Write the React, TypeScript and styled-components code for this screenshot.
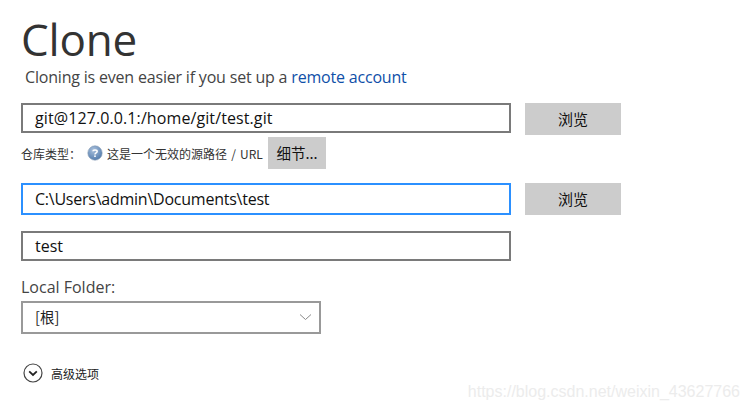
import styled, { createGlobalStyle } from 'styled-components';

const GlobalStyle = createGlobalStyle`
	html, body {
		margin: 0;
		background: #fff;
	}
	body {
		font-family: 'Open Sans', 'Noto Sans', 'Noto Sans CJK SC', sans-serif;
	}
`;

const Page = styled.div`
	position: relative;
	width: 749px;
	height: 410px;
	overflow: hidden;
	padding: 14px 0 0 21px;
	box-sizing: border-box;
	color: #333;
`;

const Title = styled.h1`
	margin: 0;
	height: 50px;
	line-height: 50px;
	font-size: 44px;
	font-weight: 400;
	letter-spacing: -0.2px;
	color: #333;
`;

const Subtitle = styled.div`
	margin: 3px 0 15px 4px;
	height: 21px;
	line-height: 21px;
	font-size: 16px;
	letter-spacing: -0.19px;
	color: #444;
`;

const RemoteLink = styled.a`
	color: #0f4fa8;
`;

const Row = styled.div<{ $mb?: number }>`
	display: flex;
	align-items: flex-start;
	gap: 14px;
	margin-bottom: ${(props) => props.$mb ?? 0}px;
`;

const TextInput = styled.div<{ $focused?: boolean; $h?: number; $ls?: number }>`
	box-sizing: border-box;
	width: 490px;
	height: ${(props) => props.$h ?? 30}px;
	line-height: ${(props) => (props.$h ?? 30) - 4}px;
	border: 2px solid ${(props) => (props.$focused ? '#2b90ff' : '#7a7a7a')};
	padding-left: 12px;
	font-size: 16px;
	letter-spacing: ${(props) => props.$ls ?? 0}px;
	color: #111;
`;

const Button = styled.button`
	width: 96px;
	height: 32px;
	padding: 0 0 2px;
	border: none;
	background: #ccc;
	font-family: 'Noto Sans CJK SC', sans-serif;
	font-size: 15px;
	color: #111;
`;

const InfoRow = styled.div`
	display: flex;
	align-items: center;
	height: 32px;
	margin: 2px 0 14px;
	font-family: 'Noto Sans CJK SC', sans-serif;
	font-size: 12px;
	color: #333;
`;

const InfoLabel = styled.span`
	width: 66px;
`;

const InfoText = styled.span`
	margin-left: 4px;
	width: 161px;
	white-space: nowrap;
	word-spacing: 1.5px;
`;

const DetailsButton = styled(Button)`
	width: 58px;
	font-size: 14.5px;
`;

const FolderLabel = styled.div`
	margin: 16px 0 3px;
	height: 21px;
	line-height: 21px;
	font-size: 16px;
	color: #444;
`;

const Select = styled.div`
	box-sizing: border-box;
	display: flex;
	align-items: center;
	justify-content: space-between;
	width: 300px;
	height: 33px;
	padding: 0 7px 2px 12px;
	border: 2px solid #999;
	font-family: 'Noto Sans CJK SC', sans-serif;
	font-size: 14.5px;
	color: #222;
`;

const Advanced = styled.div`
	display: flex;
	align-items: center;
	gap: 8px;
	margin: 29px 0 0 2px;
	height: 20px;
	font-family: 'Noto Sans CJK SC', sans-serif;
	font-size: 12px;
	color: #222;
`;

const Watermark = styled.div`
	position: absolute;
	right: 9px;
	top: 383px;
	font-family: 'Liberation Sans', sans-serif;
	font-size: 16px;
	color: #ececec;
	white-space: nowrap;
`;

const HelpIcon = () => (
	<svg width="16" height="16" viewBox="0 0 16 16">
		<defs>
			<radialGradient id="help" cx="40%" cy="30%" r="75%">
				<stop offset="0%" stopColor="#a9c0dc" />
				<stop offset="100%" stopColor="#4f79ab" />
			</radialGradient>
		</defs>
		<circle cx="8" cy="8" r="7.2" fill="url(#help)" stroke="#8a9db5" strokeWidth="0.6" />
		<path d="M5.9 6.2 C6 4.6 10.2 4.5 10.2 6.5 C10.2 8 8 7.8 8 9.4" fill="none" stroke="#fff" strokeWidth="1.5" />
		<rect x="7.2" y="10.4" width="1.6" height="1.6" fill="#fff" />
	</svg>
);

const ChevronDown = () => (
	<svg width="13" height="8" viewBox="0 0 13 8">
		<path d="M1 1.5 L6.5 6.5 L12 1.5" fill="none" stroke="#8a8a8a" strokeWidth="1" />
	</svg>
);

const ExpandIcon = () => (
	<svg width="20" height="20" viewBox="0 0 20 20">
		<circle cx="10" cy="10" r="9" fill="none" stroke="#444" strokeWidth="1.2" />
		<path d="M6.2 8.4 L10 12 L13.8 8.4" fill="none" stroke="#222" strokeWidth="1.8" />
	</svg>
);

const App = () => {
	return (
		<Page>
			<GlobalStyle />
			<Title>Clone</Title>
			<Subtitle>
				Cloning is even easier if you set up a <RemoteLink>remote account</RemoteLink>
			</Subtitle>
			<Row>
				<TextInput $ls={0.1}>git@127.0.0.1:/home/git/test.git</TextInput>
				<Button>浏览</Button>
			</Row>
			<InfoRow>
				<InfoLabel>仓库类型：</InfoLabel>
				<HelpIcon />
				<InfoText>这是一个无效的源路径 / URL</InfoText>
				<DetailsButton>细节...</DetailsButton>
			</InfoRow>
			<Row $mb={16}>
				<TextInput $focused $h={32} $ls={-0.24}>C:\Users\admin\Documents\test</TextInput>
				<Button>浏览</Button>
			</Row>
			<TextInput>test</TextInput>
			<FolderLabel>Local Folder:</FolderLabel>
			<Select>
				[根]
				<ChevronDown />
			</Select>
			<Advanced>
				<ExpandIcon />
				高级选项
			</Advanced>
			<Watermark>https://blog.csdn.net/weixin_43627766</Watermark>
		</Page>
	);
};

export default App;
